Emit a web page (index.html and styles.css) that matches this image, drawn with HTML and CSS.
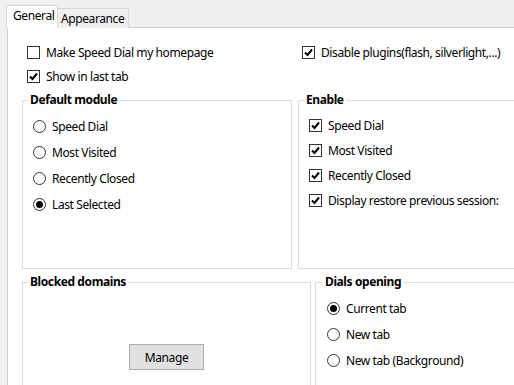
FILE: index.html
```html
<!DOCTYPE html>
<html>
<head>
<meta charset="utf-8">
<link rel="stylesheet" href="styles.css">
</head>
<body>
<div class="tabs">
  <div class="tab tab-active">General</div>
  <div class="tab tab-idle">Appearance</div>
</div>
<div class="panel">
  <div class="top">
    <div class="opts-left">
      <label class="row row-top"><span class="cb"></span><span>Make Speed Dial my homepage</span></label>
      <label class="row row-top"><span class="cb on"><svg viewBox="0 0 11 11"><path d="M2 5.5 L4.5 8 L9 2.5"/></svg></span><span>Show in last tab</span></label>
    </div>
    <div class="opts-right">
      <label class="row row-top"><span class="cb on"><svg viewBox="0 0 11 11"><path d="M2 5.5 L4.5 8 L9 2.5"/></svg></span><span>Disable plugins(flash, silverlight,...)</span></label>
    </div>
  </div>
  <div class="groups">
    <div class="grow grow-1">
      <fieldset class="box box-default">
        <legend>Default module</legend>
        <label class="row row-r"><span class="rb"></span><span>Speed Dial</span></label>
        <label class="row row-r"><span class="rb"></span><span>Most Visited</span></label>
        <label class="row row-r"><span class="rb"></span><span>Recently Closed</span></label>
        <label class="row row-r"><span class="rb on"></span><span>Last Selected</span></label>
      </fieldset>
      <fieldset class="box box-enable">
        <legend>Enable</legend>
        <label class="row row-c"><span class="cb on"><svg viewBox="0 0 11 11"><path d="M2 5.5 L4.5 8 L9 2.5"/></svg></span><span>Speed Dial</span></label>
        <label class="row row-c"><span class="cb on"><svg viewBox="0 0 11 11"><path d="M2 5.5 L4.5 8 L9 2.5"/></svg></span><span>Most Visited</span></label>
        <label class="row row-c"><span class="cb on"><svg viewBox="0 0 11 11"><path d="M2 5.5 L4.5 8 L9 2.5"/></svg></span><span>Recently Closed</span></label>
        <label class="row row-c"><span class="cb on"><svg viewBox="0 0 11 11"><path d="M2 5.5 L4.5 8 L9 2.5"/></svg></span><span>Display restore previous session:</span></label>
      </fieldset>
    </div>
    <div class="grow grow-2">
      <fieldset class="box box-blocked">
        <legend>Blocked domains</legend>
        <div class="btn-wrap"><button class="btn">Manage</button></div>
      </fieldset>
      <fieldset class="box box-dials">
        <legend>Dials opening</legend>
        <label class="row row-r"><span class="rb on"></span><span>Current tab</span></label>
        <label class="row row-r"><span class="rb"></span><span>New tab</span></label>
        <label class="row row-r"><span class="rb"></span><span>New tab (Background)</span></label>
      </fieldset>
    </div>
  </div>
</div>
</body>
</html>
```
FILE: styles.css
```css
html, body {
  margin: 0;
  padding: 0;
}
body {
  width: 514px;
  height: 385px;
  overflow: hidden;
  background: #f0f0f0;
  font-family: "Noto Sans", "Open Sans", sans-serif;
  font-size: 12px;
  letter-spacing: -0.4px;
  color: #000;
}
.tabs {
  display: flex;
  align-items: flex-end;
  padding: 6px 0 0 6px;
  height: 22px;
  position: relative;
  z-index: 2;
  margin-bottom: -1px;
}
.tab {
  box-sizing: border-box;
  border: 1px solid #d9d9d9;
  border-bottom: none;
  line-height: 18px;
}
.tab-active {
  width: 52px;
  height: 23px;
  background: #fff;
  padding: 1px 0 0 6px;
}
.tab-idle {
  width: 71px;
  height: 20px;
  border-left: none;
  background: #f0f0f0;
  padding: 1px 0 0 3px;
}
.panel {
  margin-left: 7px;
  width: 620px;
  height: 400px;
  border: 1px solid #cfcfcf;
  background: #fff;
  position: relative;
  z-index: 1;
}
.top {
  display: flex;
  padding: 12px 0 0 19px;
}
.opts-left {
  width: 275px;
}
.row {
  display: flex;
  align-items: center;
  gap: 6px;
  white-space: nowrap;
}
.row-top { height: 24px; }
.row-r { height: 26px; }
.row-c { height: 25px; }
.cb {
  box-sizing: border-box;
  width: 13px;
  height: 13px;
  border: 1px solid #333;
  background: #fff;
  display: flex;
  align-items: center;
  justify-content: center;
  flex: none;
}
.cb svg {
  width: 11px;
  height: 11px;
}
.cb path {
  fill: none;
  stroke: #000;
  stroke-width: 2;
}
.rb {
  box-sizing: border-box;
  width: 13px;
  height: 13px;
  border: 1px solid #333;
  border-radius: 50%;
  background: #fff;
  display: flex;
  align-items: center;
  justify-content: center;
  flex: none;
}
.rb.on::after {
  content: "";
  width: 7px;
  height: 7px;
  border-radius: 50%;
  background: #000;
}
.groups {
  padding: 4px 0 0 14px;
}
.grow {
  display: flex;
}
.grow-1 {
  gap: 6px;
  height: 177px;
}
.grow-2 {
  gap: 4px;
  margin-top: 5px;
}
.box {
  box-sizing: border-box;
  margin: 0;
  border: 1px solid #dcdcdc;
  padding: 5px 0 0 10px;
  min-width: 0;
}
.box legend {
  font-weight: bold;
  line-height: 16px;
  padding: 0 2px;
  margin-left: -5px;
}
.box-default { width: 270px; height: 177px; }
.box-enable { width: 300px; height: 177px; }
.box-blocked { width: 289px; height: 140px; padding-left: 0; }
.box-blocked legend { margin-left: 5px; }
.box-dials { width: 300px; height: 140px; padding-left: 11px; }
.box-dials legend { margin-left: -4px; }
.btn-wrap {
  display: flex;
  justify-content: center;
  padding-top: 49px;
}
.btn {
  box-sizing: border-box;
  width: 75px;
  height: 26px;
  background: #e1e1e1;
  border: 1px solid #adadad;
  border-radius: 0;
  font-family: inherit;
  font-size: 12px;
  letter-spacing: -0.4px;
  color: #000;
  padding: 0;
}
```
